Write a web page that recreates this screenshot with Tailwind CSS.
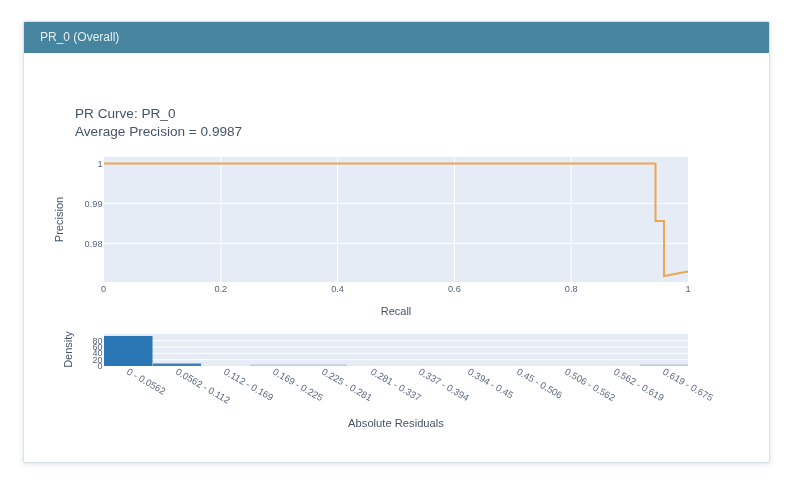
<!DOCTYPE html>
<html lang="en">
<head>
  <meta charset="UTF-8">
  <title>PR_0 (Overall)</title>
  <script src="https://cdn.jsdelivr.net/npm/@tailwindcss/browser@4"></script>
</head>
<body class="bg-white font-['Liberation_Sans',sans-serif]">
  <main class="pt-[21px] pl-[23px] h-[499px] overflow-hidden blur-[0.4px]">
    <section class="w-[747px] h-[442px] bg-white border border-[#dde1ea] rounded-[2px] shadow-[0_1px_5px_rgba(120,130,160,0.25)] overflow-hidden">
      <h2 class="h-[31px] bg-[#46849f] pl-4 text-[12px] leading-[31px] font-normal text-[#e6eff3]">PR_0 (Overall)</h2>
      <svg class="block" width="745" height="409" viewBox="24 53 745 409" font-family="Liberation Sans, sans-serif" fill="#56627a">
        <!-- PR curve -->
        <text x="75" y="118" font-size="13.6" fill="#465368">PR Curve: PR_0</text>
        <text x="75" y="136" font-size="13.6" fill="#465368">Average Precision = 0.9987</text>
        <rect x="104" y="157" width="584" height="125" fill="#e5ecf6"/>
        <g stroke="#fff" stroke-width="1">
          <path d="M220.8 157V282M337.6 157V282M454.4 157V282M571.2 157V282"/>
          <path d="M104 203.5H688M104 243.5H688"/>
        </g>
        <path d="M104 163.5H655.5V221H664V276L688 271.5" fill="none" stroke="#eda650" stroke-width="2"/>
        <g font-size="9.2" text-anchor="end">
          <text x="102.5" y="167">1</text>
          <text x="102.5" y="207">0.99</text>
          <text x="102.5" y="247">0.98</text>
        </g>
        <g font-size="9.2" text-anchor="middle">
          <text x="103.5" y="292">0</text>
          <text x="220.8" y="292">0.2</text>
          <text x="337.6" y="292">0.4</text>
          <text x="454.4" y="292">0.6</text>
          <text x="571.2" y="292">0.8</text>
          <text x="688" y="292">1</text>
        </g>
        <text x="396" y="314.5" font-size="11" text-anchor="middle" fill="#465368">Recall</text>
        <text transform="translate(63 219.5) rotate(-90)" font-size="11" text-anchor="middle" fill="#465368">Precision</text>

        <!-- residuals histogram -->
        <rect x="104" y="334" width="584" height="32" fill="#e5ecf6"/>
        <path d="M104 340.8H688M104 347H688M104 353.4H688M104 359.7H688" stroke="#fff" stroke-width="1"/>
        <rect x="104" y="336" width="48.5" height="30" fill="#2a75b4"/>
        <rect x="153" y="363.5" width="48" height="2.5" fill="#3a7fb8"/>
        <rect x="250" y="364.5" width="97" height="1.5" fill="#b9cfe4"/>
        <rect x="640" y="364.5" width="48" height="1.5" fill="#b5cde2"/>
        <g font-size="9" text-anchor="end">
          <text x="102.5" y="369">0</text>
          <text x="102.5" y="362.7">20</text>
          <text x="102.5" y="356.4">40</text>
          <text x="102.5" y="350">60</text>
          <text x="102.5" y="343.8">80</text>
        </g>
        <g font-size="9.5" fill="#5c687e">
          <text transform="translate(126 373.5) rotate(30)">0 - 0.0562</text>
          <text transform="translate(175 373.5) rotate(30)">0.0562 - 0.112</text>
          <text transform="translate(223 373.5) rotate(30)">0.112 - 0.169</text>
          <text transform="translate(272 373.5) rotate(30)">0.169 - 0.225</text>
          <text transform="translate(321 373.5) rotate(30)">0.225 - 0.281</text>
          <text transform="translate(370 373.5) rotate(30)">0.281 - 0.337</text>
          <text transform="translate(418 373.5) rotate(30)">0.337 - 0.394</text>
          <text transform="translate(467 373.5) rotate(30)">0.394 - 0.45</text>
          <text transform="translate(516 373.5) rotate(30)">0.45 - 0.506</text>
          <text transform="translate(564 373.5) rotate(30)">0.506 - 0.562</text>
          <text transform="translate(613 373.5) rotate(30)">0.562 - 0.619</text>
          <text transform="translate(662 373.5) rotate(30)">0.619 - 0.675</text>
        </g>
        <text x="396" y="427" font-size="11.2" text-anchor="middle" fill="#465368">Absolute Residuals</text>
        <text transform="translate(72 349.5) rotate(-90)" font-size="11" text-anchor="middle" fill="#465368">Density</text>
      </svg>
    </section>
  </main>
</body>
</html>
